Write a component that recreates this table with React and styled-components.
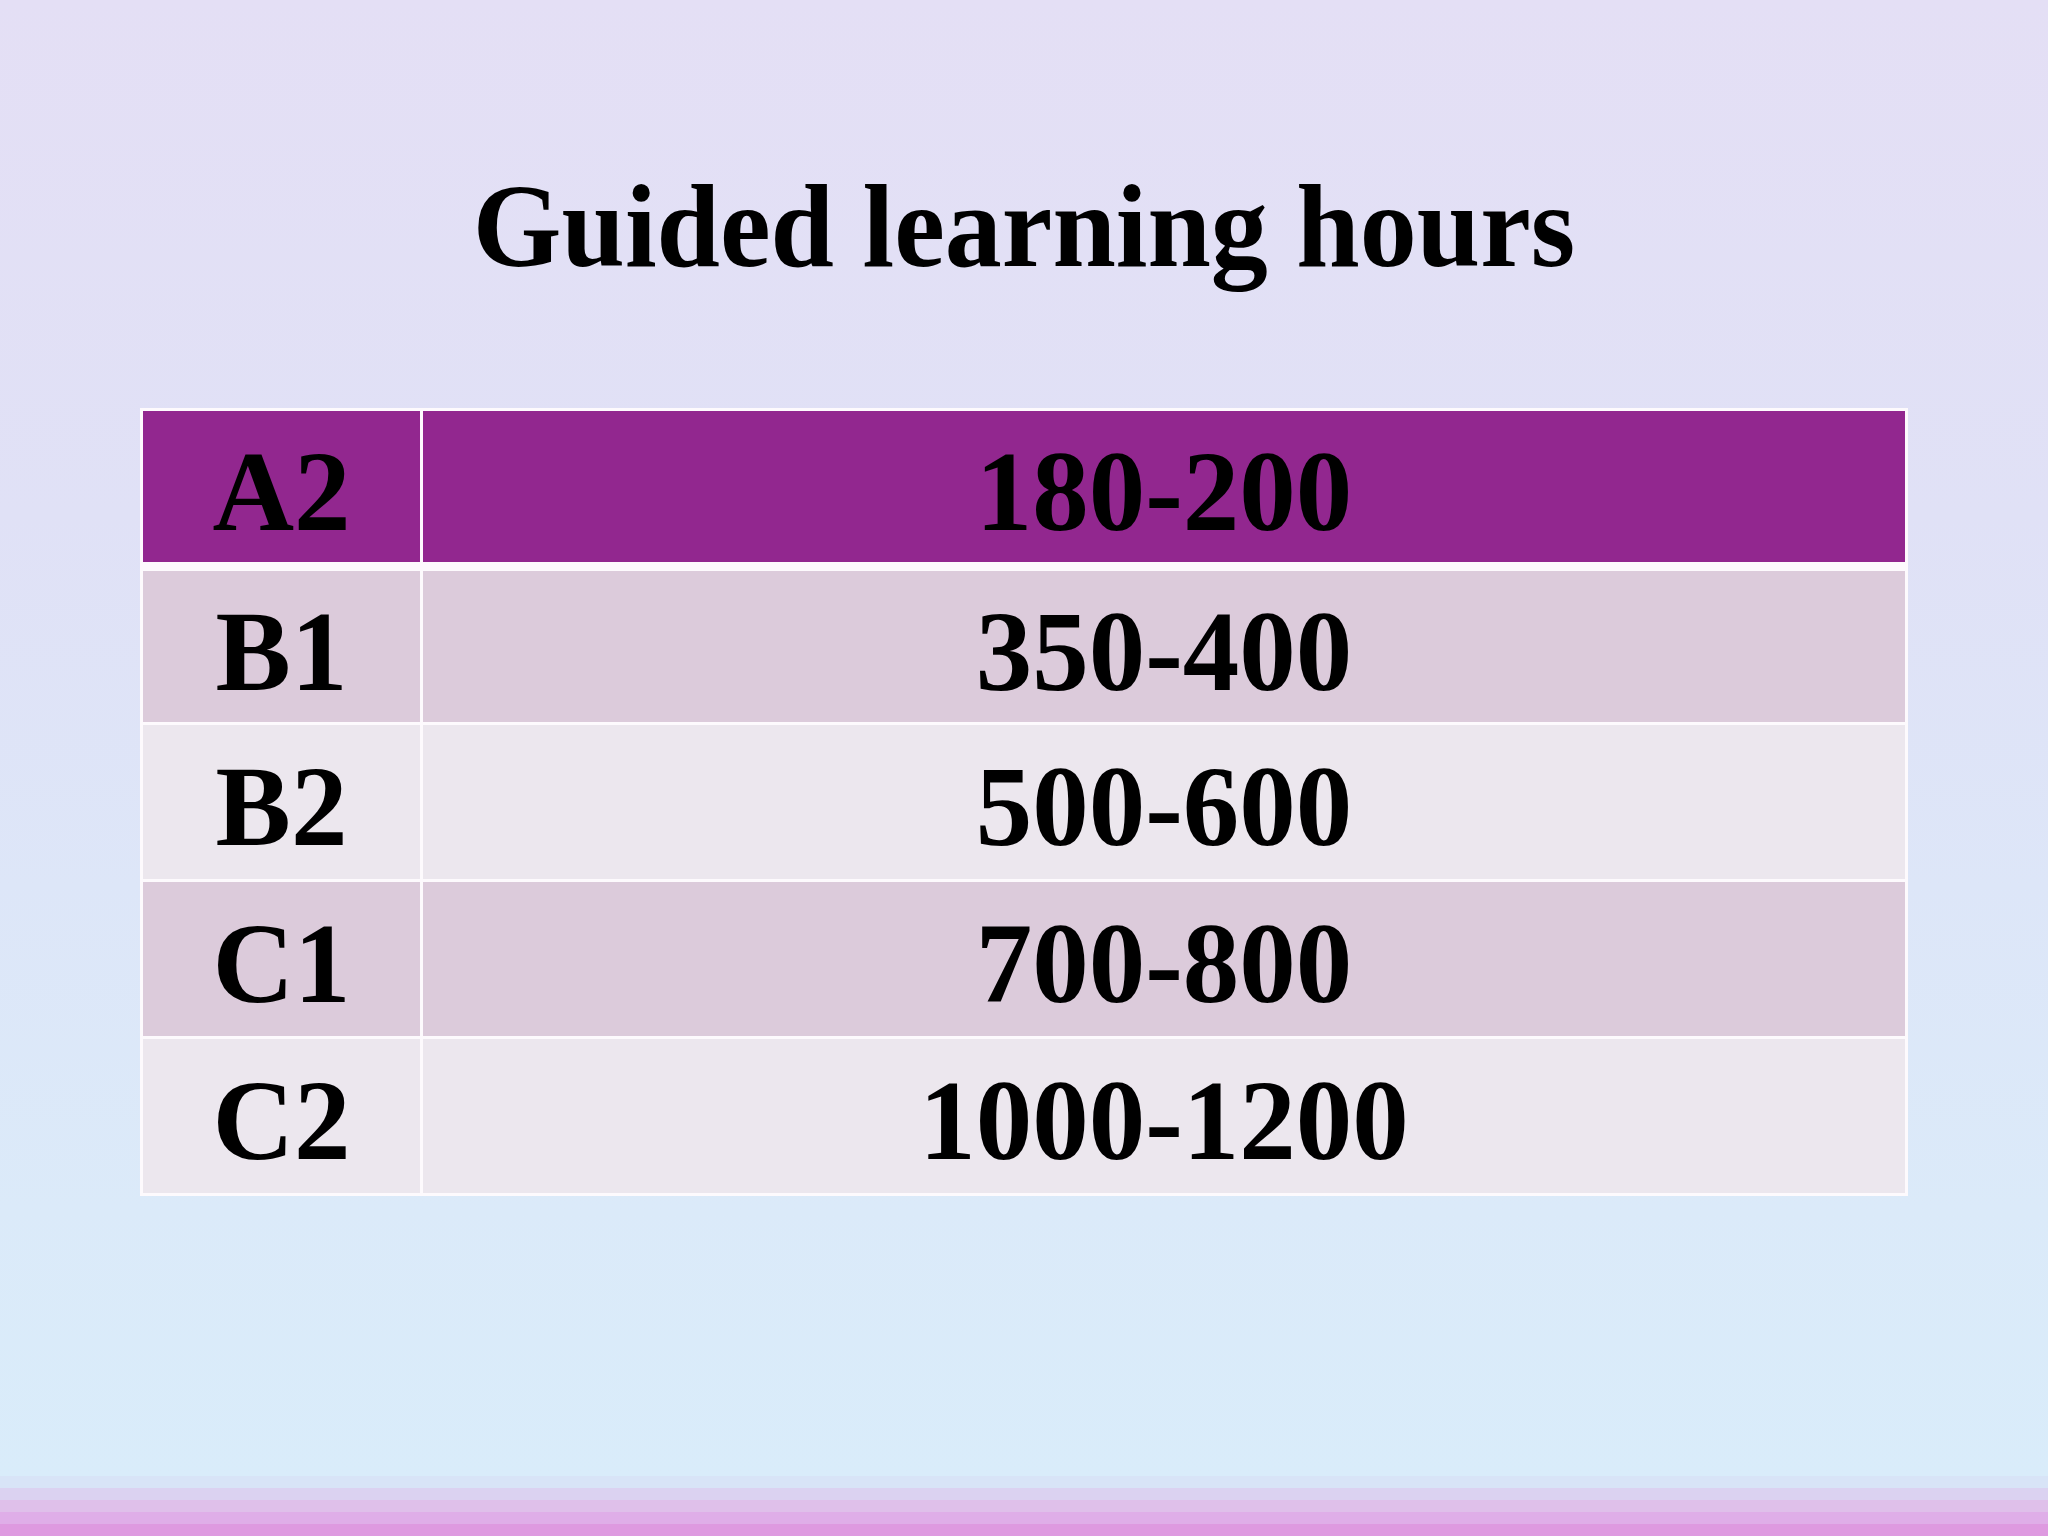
import React from "react";
import styled, { createGlobalStyle } from "styled-components";

const GlobalStyle = createGlobalStyle`
  html, body { margin: 0; padding: 0; }
  body { width: 2048px; height: 1536px; overflow: hidden; }
  * { box-sizing: border-box; }
`;

const Slide = styled.div`
  width: 2048px;
  height: 1536px;
  display: flex;
  flex-direction: column;
  font-family: "Liberation Serif", "Times New Roman", serif;
  color: #000;
`;

const Body = styled.main`
  flex: 1;
  display: flex;
  flex-direction: column;
  align-items: stretch;
  padding: 170px 140px 0;
  background: linear-gradient(180deg, #e4dff5 0%, #e0e1f6 35%, #dde6f8 60%, #dbeaf9 82%, #d9ecfa 100%);
`;

const Title = styled.h1`
  margin: 0 0 124px;
  font-size: 114px;
  line-height: 1;
  font-weight: 700;
  text-align: center;
  transform: scaleY(1.035);
`;

const Table = styled.div`
  display: flex;
  flex-direction: column;
  gap: 3px;
  padding: 3px;
  background: #fdfafd;
`;

const Row = styled.div`
  display: grid;
  grid-template-columns: 277px 1fr;
  gap: 3px;
  height: ${(p) => p.$h}px;
  margin-bottom: ${(p) => (p.$header ? 6 : 0)}px;
`;

const Cell = styled.div`
  display: flex;
  align-items: center;
  justify-content: center;
  padding-top: 9px;
  background: ${(p) => p.$bg};
`;

const CellText = styled.span`
  display: inline-block;
  font-size: 113px;
  line-height: 1;
  font-weight: 700;
  white-space: nowrap;
  transform: scaleY(1.01);
`;

const Stripes = styled.div`
  display: flex;
  flex-direction: column;
`;

const Stripe = styled.div`
  height: 12px;
  background: ${(p) => p.$c};
`;

const rows = [
  { level: "A2", hours: "180-200", bg: "#92278f", h: 151, header: true },
  { level: "B1", hours: "350-400", bg: "#dccbdb", h: 151 },
  { level: "B2", hours: "500-600", bg: "#ece7ee", h: 154 },
  { level: "C1", hours: "700-800", bg: "#dccbdb", h: 154 },
  { level: "C2", hours: "1000-1200", bg: "#ece7ee", h: 154 },
];

const stripeColors = ["#d8e4f7", "#dbd2f1", "#dfc0ea", "#dfaee8", "#de9ae0"];

export default function App() {
  return (
    <>
      <GlobalStyle />
      <Slide>
        <Body>
          <Title>Guided learning hours</Title>
          <Table>
            {rows.map((r) => (
              <Row key={r.level} $h={r.h} $header={r.header}>
                <Cell $bg={r.bg}>
                  <CellText>{r.level}</CellText>
                </Cell>
                <Cell $bg={r.bg}>
                  <CellText>{r.hours}</CellText>
                </Cell>
              </Row>
            ))}
          </Table>
        </Body>
        <Stripes>
          {stripeColors.map((c) => (
            <Stripe key={c} $c={c} />
          ))}
        </Stripes>
      </Slide>
    </>
  );
}
